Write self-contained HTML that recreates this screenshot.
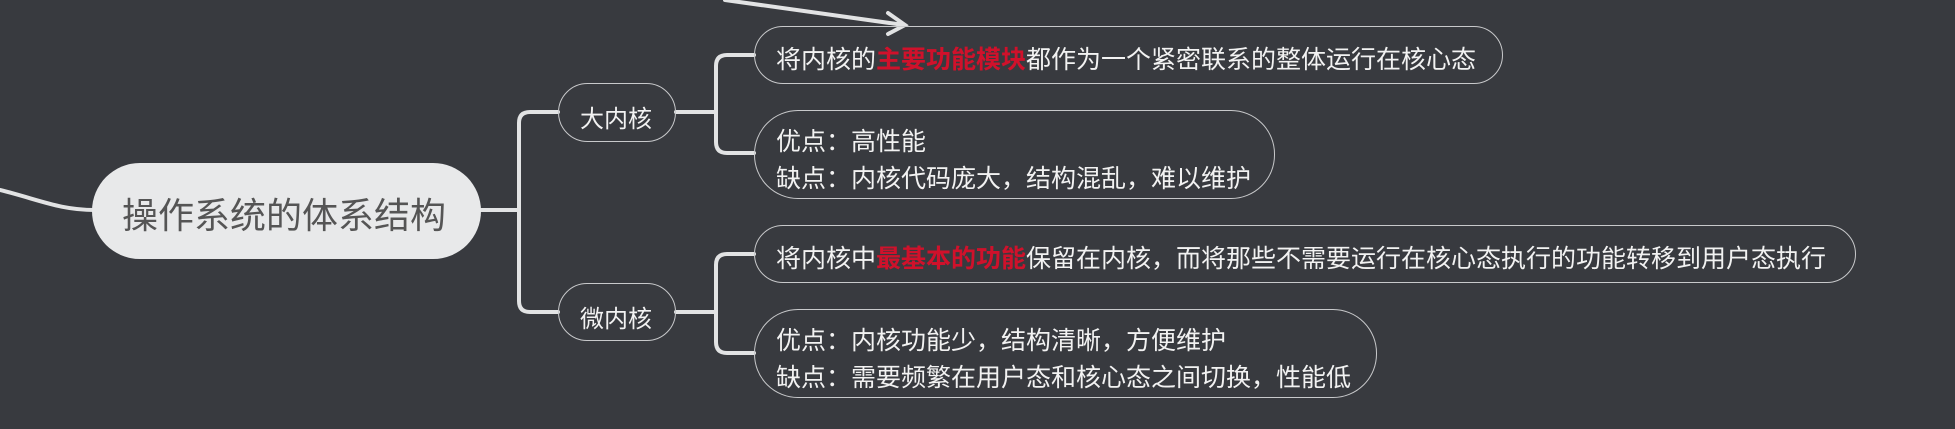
<!DOCTYPE html>
<html><head><meta charset="utf-8"><style>
body{margin:0;width:1955px;height:429px;background:#383a3f;overflow:hidden;position:relative;font-family:"Liberation Sans","Noto Sans CJK SC",sans-serif;}
.n{position:absolute;box-sizing:border-box;border:1.5px solid #c8c9cb;border-radius:32px;color:#f2f2f2;font-size:24px;}
.r{color:#d0112b;font-weight:bold;}
.t{position:absolute;white-space:nowrap;}
</style></head><body>
<svg width="1955" height="429" style="position:absolute;left:0;top:0">
<g fill="none" stroke="#e2e3e4" stroke-width="4" stroke-linecap="round">
<path d="M0,190 C40,200 60,210 95,210"/>
<path d="M481,210 H519 M558,112 H530 Q519,112 519,123 V301 Q519,312 530,312 H558"/>
<path d="M676,112 H716 M754,55 H727 Q716,55 716,66 V142 Q716,153 727,153 H754"/>
<path d="M676,312 H716 M754,254 H727 Q716,254 716,265 V342 Q716,353 727,353 H754"/>
<path d="M725,0 L904,25 M888,13 L905,25 L888,34"/>
</g></svg>
<div class="n" style="left:92px;top:163px;width:389px;height:96px;background:#e8e9ea;border:none;border-radius:48px;color:#555;font-size:36px;">
<span class="t" style="left:30px;top:24px">操作系统的体系结构</span></div>
<div class="n" style="left:558px;top:83px;width:118px;height:59px"><span class="t" style="left:21px;top:15px">大内核</span></div>
<div class="n" style="left:558px;top:283px;width:118px;height:58px"><span class="t" style="left:21px;top:15px">微内核</span></div>
<div class="n" style="left:754px;top:26px;width:749px;height:58px;font-size:25px"><span class="t" style="left:21px;top:13px">将内核的<span class="r">主要功能模块</span>都作为一个紧密联系的整体运行在核心态</span></div>
<div class="n" style="left:754px;top:110px;width:521px;height:89px;border-radius:44px;font-size:25px"><span class="t" style="left:21px;top:13px;line-height:37px">优点：高性能<br>缺点：内核代码庞大，结构混乱，难以维护</span></div>
<div class="n" style="left:754px;top:225px;width:1102px;height:58px;font-size:25px"><span class="t" style="left:21px;top:13px">将内核中<span class="r">最基本的功能</span>保留在内核，而将那些不需要运行在核心态执行的功能转移到用户态执行</span></div>
<div class="n" style="left:754px;top:309px;width:623px;height:89px;border-radius:44px;font-size:25px"><span class="t" style="left:21px;top:13px;line-height:37px">优点：内核功能少，结构清晰，方便维护<br>缺点：需要频繁在用户态和核心态之间切换，性能低</span></div>
</body></html>
